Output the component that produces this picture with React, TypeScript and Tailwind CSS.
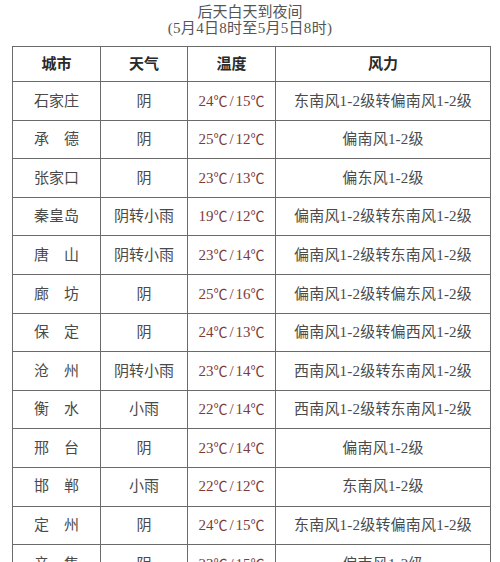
const ROWS: [string, string, string, string][] = [
  ["石家庄", "阴", "24℃/15℃", "东南风1-2级转偏南风1-2级"],
  ["承　德", "阴", "25℃/12℃", "偏南风1-2级"],
  ["张家口", "阴", "23℃/13℃", "偏东风1-2级"],
  ["秦皇岛", "阴转小雨", "19℃/12℃", "偏南风1-2级转东南风1-2级"],
  ["唐　山", "阴转小雨", "23℃/14℃", "偏南风1-2级转东南风1-2级"],
  ["廊　坊", "阴", "25℃/16℃", "偏南风1-2级转偏东风1-2级"],
  ["保　定", "阴", "24℃/13℃", "偏南风1-2级转偏西风1-2级"],
  ["沧　州", "阴转小雨", "23℃/14℃", "西南风1-2级转东南风1-2级"],
  ["衡　水", "小雨", "22℃/14℃", "西南风1-2级转东南风1-2级"],
  ["邢　台", "阴", "23℃/14℃", "偏南风1-2级"],
  ["邯　郸", "小雨", "22℃/12℃", "东南风1-2级"],
  ["定　州", "阴", "24℃/15℃", "东南风1-2级转偏南风1-2级"],
  ["辛　集", "阴", "23℃/15℃", "偏南风1-2级"],
];

const cell = "border-[1.5px] border-[#6b6b6b] text-center align-middle p-0";

// ℃ drawn with the CJK font so it comes out full-width like the reference
function Temp({ value }: { value: string }) {
  const [hi, lo] = value.split("/");
  return (
    <>
      {hi.replace("℃", "")}
      <span className="font-['Noto_Sans_CJK_SC'] text-[14px]">℃</span>
      <span className="px-[2px]">/</span>
      {lo.replace("℃", "")}
      <span className="font-['Noto_Sans_CJK_SC'] text-[14px]">℃</span>
    </>
  );
}

export default function App() {
  return (
    <div
      className="w-[500px] h-[562px] overflow-hidden bg-white text-[#4a4a4a]"
      style={{ fontFamily: '"Liberation Serif", "Noto Sans CJK SC", serif' }}
    >
      <div className="pt-[4px] text-center text-[15px] leading-[16px] text-[#555]">
        <div>后天白天到夜间</div>
        <div className="tracking-[0.3px]">(5月4日8时至5月5日8时)</div>
      </div>

      <table className="ml-[12px] mt-[10px] w-[478px] border-collapse table-fixed">
        <colgroup>
          <col className="w-[88px]" />
          <col className="w-[87px]" />
          <col className="w-[88px]" />
          <col className="w-[215px]" />
        </colgroup>
        <thead>
          <tr className="h-[35px] text-[15px] font-bold text-[#2a2a2a]">
            <th className={cell}>城市</th>
            <th className={cell}>天气</th>
            <th className={cell}>温度</th>
            <th className={cell}>风力</th>
          </tr>
        </thead>
        <tbody>
          {ROWS.map(([city, weather, temp, wind]) => (
            <tr key={city} className="h-[38.6px] text-[15px]">
              <td className={cell}>{city}</td>
              <td className={cell}>{weather}</td>
              <td className={`${cell} text-[#7d3a3a]`}>
                <Temp value={temp} />
              </td>
              <td className={`${cell} tracking-[0.2px]`}>{wind}</td>
            </tr>
          ))}
        </tbody>
      </table>
    </div>
  );
}
